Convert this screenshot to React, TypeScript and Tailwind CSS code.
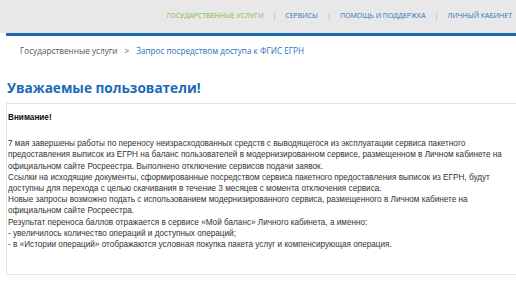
const navItems = [
  { label: "Государственные услуги", active: true },
  { label: "Сервисы" },
  { label: "Помощь и поддержка" },
  { label: "Личный кабинет" },
];

const lines = [
  "7 мая завершены работы по переносу неизрасходованных средств с выводящегося из эксплуатации сервиса пакетного предоставления выписок из ЕГРН на баланс пользователей в модернизированном сервисе, размещенном в Личном кабинете на официальном сайте Росреестра. Выполнено отключение сервисов подачи заявок.",
  "Ссылки на исходящие документы, сформированные посредством сервиса пакетного предоставления выписок из ЕГРН, будут доступны для перехода с целью скачивания в течение 3 месяцев с момента отключения сервиса.",
  "Новые запросы возможно подать с использованием модернизированного сервиса, размещенного в Личном кабинете на официальном сайте Росреестра.",
  "Результат переноса баллов отражается в сервисе «Мой баланс» Личного кабинета, а именно:",
  "- увеличилось количество операций и доступных операций;",
  "- в «Истории операций» отображаются условная покупка пакета услуг и компенсирующая операция.",
];

export default function App() {
  return (
    <div className="h-[290px] w-[516px] overflow-hidden bg-white">
      {/* Header */}
      <header className="flex h-[33px] items-center justify-end bg-[#e8e8e8] pr-[4px]">
        <nav className="flex items-center font-['Open_Sans',sans-serif] text-[7px] uppercase">
          {navItems.map((item, i) => (
            <div key={item.label} className="flex items-center">
              {i > 0 && <span className="mx-[9px] text-[#999]">|</span>}
              <span className={item.active ? "text-[#7dbb42]" : "text-[#2d70b7]"}>
                {item.label}
              </span>
            </div>
          ))}
        </nav>
      </header>
      <div className="ml-[6px] h-[3px] bg-[#1a6bb7]" />

      {/* Breadcrumbs */}
      <div className="mt-[8px] flex items-center pl-[20px] font-['Open_Sans',sans-serif] text-[8.2px] leading-[14px]">
        <span className="text-[#555]">Государственные услуги</span>
        <span className="mx-[7px] text-[#555]">&gt;</span>
        <span className="text-[#2d70b7]">Запрос посредством доступа к ФГИС ЕГРН</span>
      </div>

      {/* Title */}
      <h1 className="mt-[20px] pl-[7px] font-['Open_Sans',sans-serif] text-[13.6px] font-bold leading-[20px] text-[#1a6bb7]">
        Уважаемые пользователи!
      </h1>

      {/* Notice */}
      <div className="ml-[6px] mt-[5px] h-[172px] border border-r-0 border-[#e4e4e4] pl-[1px] pr-[4px] pt-[8px] font-['Liberation_Sans',Arial,sans-serif] text-[8.2px] leading-[11.2px] text-[#333]">
        <p className="font-bold text-[#111]">Внимание!</p>
        <p className="mt-[15px]">
          {lines.map((l, i) => (
            <span key={i}>
              {l}
              <br />
            </span>
          ))}
        </p>
      </div>
    </div>
  );
}
